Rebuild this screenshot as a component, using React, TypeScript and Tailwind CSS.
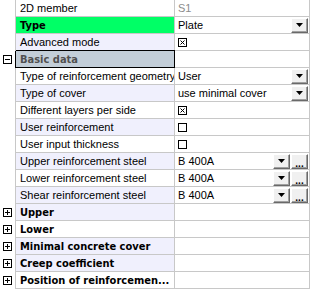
import React from 'react'

type Row = {
  label: string
  kind?: 'group' | 'section' | 'type'
  open?: boolean
  bg?: 'lav' | 'white'
  value?: string
  muted?: boolean
  check?: boolean
  drop?: boolean
  more?: boolean
}

const rows: Row[] = [
  { label: '2D member', value: 'S1', muted: true },
  { label: 'Type', kind: 'type', value: 'Plate', drop: true },
  { label: 'Advanced mode', bg: 'lav', check: true },
  { label: 'Basic data', kind: 'section', open: true },
  { label: 'Type of reinforcement geometry', value: 'User', drop: true },
  { label: 'Type of cover', bg: 'lav', value: 'use minimal cover', drop: true },
  { label: 'Different layers per side', check: true },
  { label: 'User reinforcement', bg: 'lav', check: false },
  { label: 'User input thickness', check: false },
  { label: 'Upper reinforcement steel', bg: 'lav', value: 'B 400A', drop: true, more: true },
  { label: 'Lower reinforcement steel', value: 'B 400A', drop: true, more: true },
  { label: 'Shear reinforcement steel', bg: 'lav', value: 'B 400A', drop: true, more: true },
  { label: 'Upper', kind: 'group', bg: 'lav' },
  { label: 'Lower', kind: 'group' },
  { label: 'Minimal concrete cover', kind: 'group', bg: 'lav' },
  { label: 'Creep coefficient', kind: 'group', bg: 'lav' },
  { label: 'Position of reinforcemen...', kind: 'group' },
]

function Toggle({ open }: { open?: boolean }) {
  return (
    <svg width="9" height="9" viewBox="0 0 9 9" className="block">
      <rect x="0.5" y="0.5" width="8" height="8" fill="#fff" stroke="#000" />
      <path d="M2 4.5h5" stroke="#000" />
      {!open && <path d="M4.5 2v5" stroke="#000" />}
    </svg>
  )
}

function CheckBox({ checked }: { checked?: boolean }) {
  return (
    <svg width="9" height="9" viewBox="0 0 9 9" className="block">
      <rect x="0.5" y="0.5" width="8" height="8" fill="#fff" stroke="#000" />
      {checked && <path d="M2.5 2.5l4 4M6.5 2.5l-4 4" stroke="#000" />}
    </svg>
  )
}

function Btn({ children }: { children: React.ReactNode }) {
  return (
    <div className="flex h-[15px] w-[17px] items-center justify-center border-t border-l border-t-white border-l-white border-r border-b border-r-[#696969] border-b-[#696969] bg-[#f0f0f0] shadow-[inset_-1px_-1px_0_#a0a0a0]">
      {children}
    </div>
  )
}

function Arrow() {
  return (
    <svg width="7" height="4" viewBox="0 0 7 4" className="block">
      <path d="M0 0h7L3.5 4z" fill="#000" />
    </svg>
  )
}

export default function App() {
  return (
    <div
      className="w-[310px] h-[290px] bg-white text-[11px] leading-none text-black overflow-hidden"
      style={{ fontFamily: '"Liberation Sans", Arial, sans-serif' }}
    >
      <div className="border-r border-[#c8c8c8]">
        {rows.map((r, i) => {
          const section = r.kind === 'section'
          const bold = r.kind === 'group' || r.kind === 'type' || section
          let labelBg = 'bg-white'
          if (r.bg === 'lav') labelBg = 'bg-[#f0f0fd]'
          if (r.kind === 'type') labelBg = 'bg-[#00ff66]'
          if (section) labelBg = 'bg-[#c3ced8]'
          return (
            <div key={i} className="flex h-[17px]">
              <div className="w-[16px] shrink-0 border-r border-[#c8c8c8] bg-white flex items-center pl-[3px]">
                {(r.kind === 'group' || section) && <Toggle open={r.open} />}
              </div>
              <div
                className={
                  'w-[159px] shrink-0 flex items-center pl-[4px] overflow-hidden whitespace-nowrap border-b border-r ' +
                  labelBg +
                  (section
                    ? ' border-black shadow-[0_-1px_0_0_#000,-1px_0_0_0_#000] text-[#505050]'
                    : ' border-[#c8c8c8]') +
                  (bold ? " font-bold font-['DejaVu_Sans_Condensed',sans-serif]" : '')
                }
              >
                {r.label}
              </div>
              <div className="flex-1 flex items-center border-b border-[#c8c8c8] bg-white pl-[3px] pr-[1px] whitespace-nowrap overflow-hidden">
                {r.check !== undefined ? (
                  <CheckBox checked={r.check} />
                ) : (
                  <span className={'flex-1 ' + (r.muted ? 'text-[#8c8c8c]' : '')}>{r.value}</span>
                )}
                {r.drop && (
                  <div className="flex gap-[1px]">
                    <Btn>
                      <Arrow />
                    </Btn>
                    {r.more && (
                      <Btn>
                        <span className="text-[10px] leading-none mt-[5px] font-bold">...</span>
                      </Btn>
                    )}
                  </div>
                )}
              </div>
            </div>
          )
        })}
      </div>
    </div>
  )
}
